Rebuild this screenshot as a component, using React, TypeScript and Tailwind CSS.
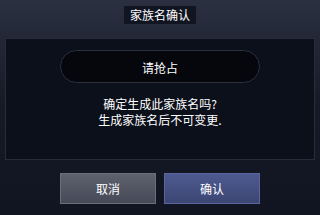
export default function App() {
  return (
    <div
      className="w-[320px] h-[215px] flex flex-col bg-gradient-to-b from-[#2a3040] via-[#151a26] to-[#111522] text-white"
      style={{ fontFamily: '"Noto Sans CJK SC", sans-serif' }}
    >
      <div className="pt-[6px] flex justify-center">
        <div className="h-[18px] px-[6px] bg-[#111522] flex items-center text-[12px] leading-none">
          家族名确认
        </div>
      </div>
      <div className="mt-[14px] mx-[5px] h-[122px] border border-[#262c3a] bg-[#0c101b] flex flex-col items-center">
        <div className="mt-[11px] w-[200px] h-[33px] rounded-full border border-[#2a3040] bg-[#05070d] flex items-center justify-center text-[12px] pt-[3px]">
          请抢占
        </div>
        <div className="mt-[13px] text-[12px] leading-[16px] text-center">
          <div>确定生成此家族名吗?</div>
          <div>生成家族名后不可变更.</div>
        </div>
      </div>
      <div className="mt-[13px] flex justify-center gap-[8px]">
        <button className="w-[96px] h-[31px] bg-gradient-to-b from-[#5e626e] to-[#464a58] border border-[#6a6e7a] text-[12px] text-white">
          取消
        </button>
        <button className="w-[96px] h-[31px] bg-gradient-to-b from-[#4e5a90] to-[#3c4674] border border-[#5a66a0] text-[12px] text-white">
          确认
        </button>
      </div>
    </div>
  );
}
